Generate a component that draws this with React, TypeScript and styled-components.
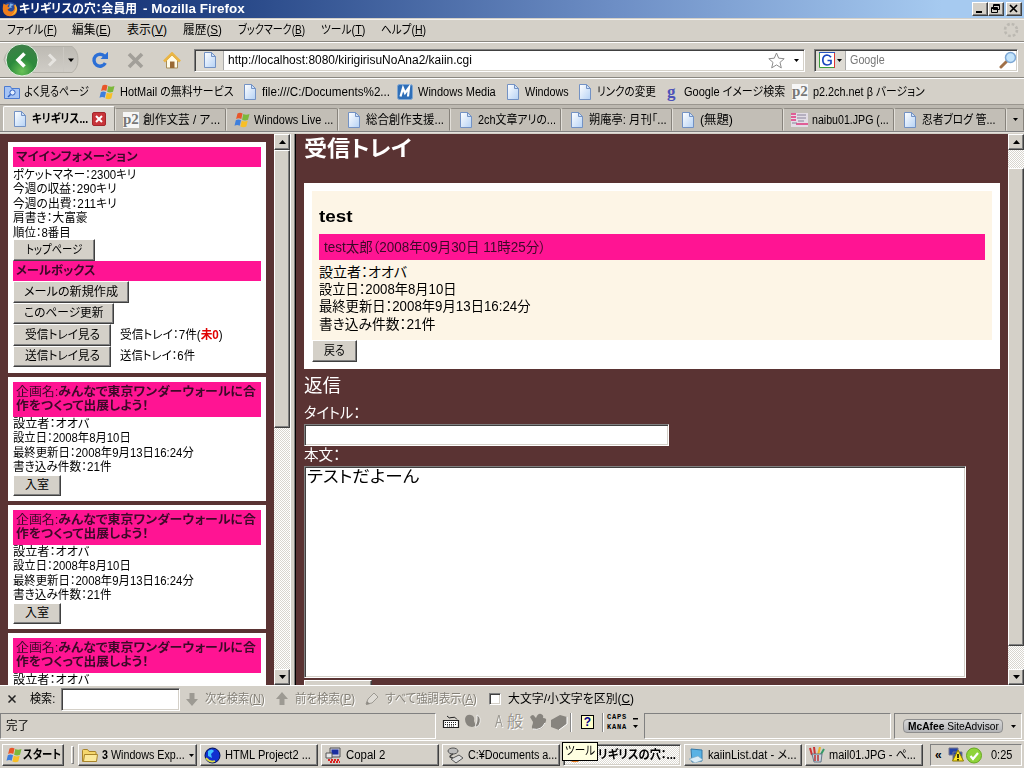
import React, { useLayoutEffect, useRef, useState } from 'react';
import styled, { createGlobalStyle, css } from 'styled-components';

const Global = createGlobalStyle`
  * { box-sizing: border-box; }
  html, body { margin: 0; padding: 0; overflow: hidden; }
  body {
    font-family: "Liberation Sans", "Noto Sans CJK JP", sans-serif;
    font-size: 12px;
    color: #000;
    background: #d4d0c8;
    font-feature-settings: "palt";
  }
`;

/* Text squeezed or stretched horizontally to a given width. */
const FitBox = styled.span<{ $w: number }>`
  display: inline-block;
  flex: none;
  width: ${(p) => p.$w}px;
  white-space: nowrap;
  overflow: visible;
`;
const FitInner = styled.span`
  display: inline-block;
  white-space: pre;
  transform-origin: 0 50%;
`;
function Fit({ w, children }: { w: number; children: React.ReactNode }) {
  const ref = useRef<HTMLSpanElement>(null);
  const [scale, setScale] = useState(1);
  useLayoutEffect(() => {
    if (ref.current) setScale(w / ref.current.offsetWidth);
  }, [w]);
  return (
    <FitBox $w={w}>
      <FitInner ref={ref} style={{ transform: `scaleX(${scale})` }}>{children}</FitInner>
    </FitBox>
  );
}

const raised = css`
  border: 1px solid;
  border-color: #fff #404040 #404040 #fff;
  box-shadow: inset -1px -1px 0 #808080;
`;
const sunken = css`
  border: 1px solid;
  border-color: #808080 #fff #fff #808080;
  box-shadow: inset 1px 1px 0 #404040, inset -1px -1px 0 #d4d0c8;
`;

const Screen = styled.div`
  width: 1024px;
  height: 768px;
  display: flex;
  flex-direction: column;
  overflow: hidden;
  background: #d4d0c8;
`;

/* ---- title bar ---- */
const TitleBar = styled.div`
  height: 18px;
  flex: none;
  display: flex;
  align-items: center;
  background: linear-gradient(90deg, #0c286e 0%, #264686 22%, #6d8ec5 60%, #a6caf0 92%);
  color: #fff;
  font-weight: bold;
  padding: 0 0 0 2px;
  line-height: 18px;
  gap: 1px;
`;
const Caption = styled.span`flex: 1; display: flex; gap: 6px;`;
const WinButton = styled.span<{ $gap?: number }>`
  width: 16px;
  height: 14px;
  background: #d4d0c8;
  display: flex;
  margin-left: ${(p) => p.$gap ?? 0}px;
  ${raised}
`;
const WinButtons = styled.div`display: flex; padding-right: 2px;`;

/* ---- menu bar ---- */
const MenuBar = styled.div`
  height: 23px;
  flex: none;
  display: flex;
  align-items: center;
  padding: 0 5px 2px 7px;
  margin-top: 1px;
  border-top: 1px solid #f4f2ee;
  border-bottom: 1px solid #8a8780;
  line-height: 18px;
`;
const MenuItem = styled.span<{ $gap: number }>`margin-right: ${(p) => p.$gap}px;`;
const Spacer = styled.span`flex: 1;`;

/* ---- navigation bar ---- */
const NavBar = styled.div`
  height: 36px;
  flex: none;
  display: flex;
  align-items: center;
  border-top: 1px solid #fff;
  border-bottom: 1px solid #8a8780;
  padding-left: 3px;
`;
const NavGap = styled.span<{ $w: number }>`width: ${(p) => p.$w}px; flex: none;`;
const Field = styled.div<{ $w: number; $h: number }>`
  width: ${(p) => p.$w}px;
  height: ${(p) => p.$h}px;
  background: #fff;
  display: flex;
  align-items: center;
  flex: none;
  ${sunken}
`;
const FieldCell = styled.span<{ $w: number }>`
  width: ${(p) => p.$w}px;
  height: 19px;
  margin-left: 1px;
  background: #dedbd4;
  border-right: 1px solid #aaa;
  margin-right: 4px;
  display: flex;
  align-items: center;
  justify-content: center;
  gap: 2px;
`;
const Hint = styled.span`color: #777; flex: 1;`;

/* ---- bookmarks ---- */
const Bookmarks = styled.div`
  height: 27px;
  flex: none;
  border-top: 1px solid #fff;
  border-bottom: 1px solid #9a968f;
  display: grid;
  align-items: center;
  padding-left: 4px;
  grid-template-columns: 95px 143px 155px 108px 72px 88px 127px 1fr;
`;
const Bookmark = styled.span<{ $gap?: number }>`
  display: flex;
  align-items: center;
  gap: ${(p) => p.$gap ?? 4}px;
  line-height: 18px;
`;

/* ---- tabs ---- */
const TabStrip = styled.div`
  height: 27px;
  flex: none;
  background: #bcb8b0;
  display: flex;
  align-items: flex-end;
  padding-left: 3px;
  border-bottom: 1px solid #808080;
`;
const Tab = styled.div<{ $w: number; $active?: boolean; $pad?: number }>`
  width: ${(p) => p.$w}px;
  height: ${(p) => (p.$active ? 25 : 23)}px;
  background: ${(p) => (p.$active ? '#d8d5ce' : '#c2beb6')};
  border: 1px solid;
  border-color: ${(p) => (p.$active ? '#fff #8a8780 #d8d5ce #fff' : '#908c85 #86827b #c2beb6 #e2dfd9')};
  border-radius: 2px 2px 0 0;
  font-weight: ${(p) => (p.$active ? 'bold' : 'normal')};
  display: flex;
  align-items: center;
  gap: 4px;
  padding-left: ${(p) => p.$pad ?? 7}px;
  line-height: 18px;
  flex: none;
`;
const TabEdge = styled.div`height: 2px; flex: none; background: #d4d0c8; border-top: 1px solid #e4e1dc;`;
const CloseBox = styled.span`
  width: 14px;
  height: 14px;
  background: #c8353a;
  border: 1px solid #a3262b;
  border-radius: 2px;
  display: flex;
`;
const P2Box = styled.span`
  width: 16px;
  height: 16px;
  background: #f6f6f6;
  color: #777;
  font: bold 15px/14px "Liberation Serif", serif;
`;

/* ---- content frames ---- */
const Frames = styled.div`
  height: 551px;
  flex: none;
  display: flex;
  overflow: hidden;
  background: #5a3333;
`;
const SideFrame = styled.div`
  width: 274px;
  padding: 8px 8px 0;
  display: flex;
  flex-direction: column;
  gap: 4px;
  flex: none;
`;
const Card = styled.div<{ $h: number }>`
  height: ${(p) => p.$h}px;
  flex: none;
  background: #fff;
  padding: 5px 5px 0;
  line-height: 14.4px;
`;
const PinkHead = styled.div<{ $two?: boolean; $gap?: number }>`
  height: ${(p) => (p.$two ? 35 : 20)}px;
  margin-top: ${(p) => p.$gap ?? 0}px;
  background: #ff1493;
  color: #3c0a28;
  padding: 3px 3px 0;
  line-height: 14px;
  font-weight: ${(p) => (p.$two ? 'normal' : 'bold')};
`;
const Line = styled.div`height: 14.4px; overflow: visible;`;
const InfoLines = styled.div`height: 72px; padding-top: 1px;`;
const Button = styled.span<{ $w: number; $h?: number }>`
  display: flex;
  align-items: center;
  justify-content: center;
  width: ${(p) => p.$w}px;
  height: ${(p) => p.$h ?? 21.5}px;
  background: #d4d0c8;
  line-height: 16px;
  flex: none;
  ${raised}
`;
const MailRow = styled.div`display: flex; align-items: center; gap: 9px; height: 21.5px;`;
const Unread = styled.b`color: #e00000;`;

const ScrollTrack = styled.div<{ $w: number }>`
  width: ${(p) => p.$w}px;
  height: 551px;
  flex: none;
  display: flex;
  flex-direction: column;
  background: repeating-conic-gradient(#fff 0 25%, #d8d5ce 0 50%) 0 0 / 2px 2px;
`;
const ScrollButton = styled.div`
  height: 16px;
  flex: none;
  background: #d4d0c8;
  display: flex;
  align-items: center;
  justify-content: center;
  ${raised}
`;
const Thumb = styled.div<{ $h: number; $top: number }>`
  height: ${(p) => p.$h}px;
  margin-top: ${(p) => p.$top}px;
  flex: none;
  background: #d4d0c8;
  ${raised}
`;
const Splitter = styled.div`
  width: 6px;
  flex: none;
  background: #d4d0c8;
  border-left: 1px solid #fff;
  border-right: 1px solid #000;
  box-shadow: inset -1px 0 0 #808080;
`;
const MainFrame = styled.div`
  flex: 1;
  padding: 0 8px;
  color: #fff;
  display: flex;
  flex-direction: column;
  align-items: flex-start;
`;
const Heading = styled.h1`
  margin: 0;
  height: 49px;
  flex: none;
  font-size: 22px;
  line-height: 30px;
`;
const Panel = styled.div`
  width: 696px;
  height: 186px;
  background: #fff;
  color: #000;
  padding: 8px;
  flex: none;
`;
const Message = styled.div`
  height: 149px;
  background: #fdf5e6;
  padding: 16px 7px 0;
  font-size: 14px;
  line-height: 17.2px;
`;
const Subject = styled.div`
  height: 27px;
  font-size: 16px;
  font-weight: bold;
  line-height: 20px;
`;
const Sender = styled.div`
  height: 26px;
  background: #ff1493;
  color: #3c0a28;
  padding-left: 5px;
  line-height: 26px;
  margin-bottom: 4px;
`;
const MessageLine = styled.div`height: 17.2px;`;
const Sub = styled.div`height: 35px; flex: none; font-size: 18px; line-height: 35px;`;
const Label = styled.div<{ $h: number }>`
  height: ${(p) => p.$h}px;
  flex: none;
  line-height: ${(p) => p.$h - 2}px;
  font-size: 15px;
`;
const TextInput = styled.div`width: 365px; height: 22px; background: #fff; flex: none; ${sunken}`;
const TextArea = styled.div`
  width: 662px;
  height: 212px;
  background: #fff;
  color: #000;
  font-size: 16px;
  line-height: 20px;
  padding-left: 2px;
  flex: none;
  margin-bottom: 2px;
  ${sunken}
`;

/* ---- find bar, status bar ---- */
const FindBar = styled.div`
  height: 27px;
  flex: none;
  display: flex;
  align-items: center;
  border-top: 1px solid #fff;
  padding-left: 8px;
  line-height: 18px;
`;
const Dim = styled.span`color: #858178; text-shadow: 1px 1px 0 #fff;`;
const CheckBox = styled.span`width: 12px; height: 12px; background: #fff; ${sunken}`;
const StatusBar = styled.div`
  height: 28px;
  flex: none;
  display: flex;
  line-height: 24px;
`;
const StatusPane = styled.div<{ $w: number }>`
  width: ${(p) => p.$w}px;
  height: 26px;
  margin-top: 1px;
  display: flex;
  align-items: center;
  border: 1px solid;
  border-color: #808080 #fff #fff #808080;
  padding-left: 5px;
`;
const ImeBar = styled.div`
  width: 208px;
  height: 28px;
  display: flex;
  align-items: center;
  padding: 0 0 8px 6px;
`;
const LockKeys = styled.span`
  font: bold 7px/10px "Liberation Mono", monospace;
  width: 26px;
  margin-left: 3px;
  letter-spacing: 0.8px;
`;
const Divider = styled.span`width: 2px; height: 19px; border-left: 1px solid #888; border-right: 1px solid #fff;`;
const Advisor = styled.span`
  width: 100px;
  height: 14px;
  border: 1px solid #8d8d8d;
  border-radius: 4px;
  background: linear-gradient(#d8d8d8, #b4b5b8);
  font-size: 11px;
  line-height: 12px;
  padding-left: 4px;
  margin: 0 8px 0 2px;
`;

/* ---- task bar ---- */
const TaskBar = styled.div`
  height: 28px;
  flex: none;
  display: flex;
  align-items: center;
  border-top: 1px solid #fff;
  padding: 2px 1px 1px 2px;
  line-height: 18px;
`;
const Task = styled.div<{ $w: number; $ml?: number; $down?: boolean; $gap?: number }>`
  width: ${(p) => p.$w}px;
  height: 22px;
  margin-left: ${(p) => p.$ml ?? 3}px;
  display: flex;
  align-items: center;
  gap: ${(p) => p.$gap ?? 4}px;
  padding-left: 3px;
  flex: none;
  position: relative;
  background: ${(p) => (p.$down ? 'repeating-conic-gradient(#fff 0 25%, #dedbd4 0 50%) 0 0 / 2px 2px' : '#d4d0c8')};
  ${(p) => (p.$down ? sunken : raised)}
`;
const Tip = styled.span`
  position: absolute;
  left: -2px;
  top: -3px;
  width: 36px;
  height: 19px;
  padding-left: 2px;
  line-height: 17px;
  background: #ffffe1;
  border: 1px solid #000;
  font-weight: normal;
`;
const Grip = styled.span`width: 3px; height: 18px; margin-left: 7px; border: 1px solid; border-color: #fff #808080 #808080 #fff;`;
const Tray = styled.div`
  width: 92px;
  height: 22px;
  margin-left: 7px;
  display: flex;
  align-items: center;
  padding-left: 4px;
  border: 1px solid;
  border-color: #808080 #fff #fff #808080;
`;

/* ---- drawings ---- */
const Page = () => (
  <svg width="16" height="16" viewBox="0 0 16 16">
    <defs>
      <linearGradient id="pg" x1="0" y1="0" x2="1" y2="1">
        <stop offset="0" stopColor="#fff" />
        <stop offset="1" stopColor="#b5d2f5" />
      </linearGradient>
    </defs>
    <path d="M2.5.5h7l4 4v11h-11z" fill="url(#pg)" stroke="#7392c4" />
    <path d="M9.500.5v4h4z" fill="#cfe2fa" stroke="#7392c4" />
  </svg>
);
const Flag = ({ s = 16 }: { s?: number }) => (
  <svg width={s} height={s} viewBox="0 0 16 16">
    <path d="M3.500 1.500q2.500-1.500 5 0L7.300 7q-2.500-1.500-5.200 0z" fill="#e8562a" />
    <path d="M9.300 2q2.700 1.500 6.200 0l-1.500 5.800q-3 1.500-5.900 0z" fill="#7cb83a" />
    <path d="M1.800 8.200q2.500-1.500 5.200 0L5.700 13.700q-2.500-1.500-5.200 0z" fill="#3f7fdc" />
    <path d="M7.800 8.800q2.700 1.500 5.900 0L12.300 14.500q-3 1.500-5.900 0z" fill="#f8bf26" />
  </svg>
);
const Fox = () => (
  <svg width="16" height="16" viewBox="0 0 16 16">
    <circle cx="8" cy="8" r="7" fill="#2a4d9c" />
    <path d="M8 2.500c2 0 3 .8 3.500 1.500L9 5l1 1.500L7 7z" fill="#7fb4ea" />
    <path d="M1.500 2.500L4 4q1-1 3-1L5.500 5.500 8 7 5.500 8.500q1 2.500 4 2 3-1 3-4l-1-3q4 2 3.700 5.500Q14.500 15 8 15.300 1 15 .7 8 .8 5 1.500 2.500z" fill="#ee7d1c" />
    <path d="M13 3q3 4 1 8-2 3-5 3.500 4-3 4.500-6z" fill="#fbc73c" />
  </svg>
);
const Arrow = ({ up }: { up?: boolean }) => (
  <svg width="7" height="4" viewBox="0 0 7 4"><path d={up ? 'M3.500 0L7 4H0z' : 'M0 0h7L3.500 4z'} /></svg>
);
const Drop = () => (
  <svg width="5" height="3" viewBox="0 0 5 3"><path d="M0 0h5L2.500 3z" /></svg>
);
const NavButtons = () => (
  <svg width="76" height="34" viewBox="0 0 76 34">
    <defs>
      <radialGradient id="gb" cx=".5" cy=".85" r=".8">
        <stop offset="0" stopColor="#69c257" />
        <stop offset=".5" stopColor="#2c8a3c" />
        <stop offset="1" stopColor="#3d8048" />
      </radialGradient>
      <linearGradient id="pill" x1="0" y1="0" x2="0" y2="1">
        <stop offset="0" stopColor="#bdbab3" />
        <stop offset="1" stopColor="#d0cdc7" />
      </linearGradient>
    </defs>
    <path d="M12 3.500h57q6 4 6 13t-6 13H12q-8-3-11-13 2-9 11-13z" fill="url(#pill)" stroke="#b4b1a9" />
    <path d="M60.500 4v25" stroke="#cbc8c2" />
    <circle cx="19" cy="17" r="16" fill="url(#gb)" stroke="#e8f2e6" strokeWidth="1" />
    <path d="M21.500 10.500L15 17l6.500 6.500" fill="none" stroke="#fff" strokeWidth="3.600" />
    <path d="M46 11.500l5.500 5.500-5.500 5.500" fill="none" stroke="#e6e4e0" strokeWidth="3" />
    <path d="M65 15.500h6l-3 3.500z" />
  </svg>
);
const Reload = () => (
  <svg width="18" height="18" viewBox="0 0 18 18">
    <path d="M13.500 5.200A6 6 0 1 0 14.300 12" fill="none" stroke="#2c6fd6" strokeWidth="3.400" />
    <path d="M9.500 8h7.500V.8z" fill="#2c6fd6" />
  </svg>
);
const Stop = () => (
  <svg width="17" height="17" viewBox="0 0 17 17"><path d="M2 2l13 13M15 2L2 15" stroke="#a29f99" strokeWidth="3.600" /></svg>
);
const Home = () => (
  <svg width="18" height="17" viewBox="0 0 18 17">
    <path d="M3.500 8v8h11V8L9 3z" fill="#fffbe8" stroke="#a88d56" />
    <path d="M1 9.500l8-8 8 8" fill="none" stroke="#eab544" strokeWidth="2.600" />
    <path d="M7 9.500h4.500V16H7z" fill="#9a6a34" />
  </svg>
);
const Star = () => (
  <svg width="17" height="17" viewBox="0 0 17 17">
    <path d="M8.500 1l2.200 5.200 5.500.5-4.200 3.700 1.300 5.500-4.800-3-4.800 3L5 10.400.8 6.700l5.500-.5z" fill="#fff" stroke="#8c8c8c" />
  </svg>
);
const Magnifier = () => (
  <svg width="18" height="18" viewBox="0 0 18 18">
    <path d="M7.500 10.500L2 16" stroke="#a07048" strokeWidth="3" strokeLinecap="round" />
    <circle cx="11.500" cy="6.500" r="5" fill="#c4e4fb" stroke="#7da7d4" strokeWidth="1.500" />
  </svg>
);
const GIcon = () => (
  <svg width="16" height="16" viewBox="0 0 16 16">
    <path d="M.500.500h15v15H.500z" fill="#fff" stroke="#3b9c3b" />
    <path d="M15.500 0v16" stroke="#d33" /><path d="M0 .5h16" stroke="#2a55c0" />
    <path d="M12 5.200Q10.500 3 8 3 3.800 3.400 3.800 8T8 13q2.500 0 4-1.500V8.500H8.500" fill="none" stroke="#1b46c0" strokeWidth="1.700" />
  </svg>
);
const SmartFolder = () => (
  <svg width="16" height="16" viewBox="0 0 16 16">
    <path d="M.500 2.500h6l1 2h8v10h-15z" fill="#a6c4f4" stroke="#4c7bd0" />
    <circle cx="8.500" cy="8.500" r="2.600" fill="#e4f0ff" stroke="#2f5fc0" /><path d="M6.500 10.500L4 13" stroke="#2f5fc0" strokeWidth="1.500" />
  </svg>
);
const MediaIcon = () => (
  <svg width="16" height="16" viewBox="0 0 16 16">
    <rect x=".5" y=".5" width="15" height="15" rx="2" fill="#2f6fb8" stroke="#7fa6d2" />
    <path d="M3.500 12.500L6 4l2 5 4-5.500-1 9" fill="none" stroke="#fff" strokeWidth="2.200" />
  </svg>
);
const SmallG = styled.span`font: bold 17px/14px "Liberation Serif", serif; color: #4c52b8; width: 12px; padding-left: 2px;`;
const Thumbnail = () => (
  <svg width="17" height="16" viewBox="0 0 17 16">
    <path d="M0 1h17v14H0z" fill="#e3dde6" />
    <path d="M0 2h5M0 5h5M0 8h5M5 12h12" stroke="#e0357c" strokeWidth="1.500" /><path d="M6 3h9M6 6h9M1 11h5M7 9h6" stroke="#88829a" />
  </svg>
);
const Throbber = () => (
  <svg width="16" height="16" viewBox="0 0 16 16">
    <circle cx="8" cy="8" r="6" fill="none" stroke="#bbb8b1" strokeWidth="2.600" strokeDasharray="2.700 2.010" />
  </svg>
);
const FindArrow = ({ up }: { up?: boolean }) => (
  <svg width="12" height="14" viewBox="0 0 12 14">
    <path d={up ? 'M6 0l6 7H8.500v6h-5V7H0z' : 'M6 14l6-7H8.500V1h-5v6H0z'} fill="#9d9a93" />
  </svg>
);
const Pen = () => (
  <svg width="14" height="14" viewBox="0 0 14 14"><path d="M1 12l2-5 6-6 4 4-6 6z" fill="#dedbd5" stroke="#9d9a93" /><path d="M1 13l1-4 3 3z" fill="#8d8a83" /></svg>
);
const Keyboard = () => (
  <svg width="18" height="16" viewBox="0 0 18 16">
    <path d="M1.500 6.500h15v7h-15z" fill="#fff" stroke="#222" strokeWidth="1.200" /><path d="M3 8.500h12M3 10.500h12M5 12h8" stroke="#222" strokeDasharray="1 1" />
    <path d="M5 2q2 3 5 1.500t5 2" fill="none" stroke="#222" />
  </svg>
);
const Blobs = () => (
  <svg width="18" height="18" viewBox="0 0 18 18">
    <path d="M1 6q1-5 6-4 4 1 3 6l2 5-4 1q-7-1-7-8z" fill="#87847e" /><path d="M13 2q4 2 3 7t-5 5q3-6 2-12z" fill="#87847e" stroke="#fff" strokeWidth=".7" />
  </svg>
);
const Cat = () => (
  <svg width="18" height="18" viewBox="0 0 18 18"><path d="M1 4q3-4 5 0l1 1q2-5 5-4t2 4q4 0 3 3-3 9-10 9-5-1-4-4 1-2 1-4z" fill="#87847e" /><path d="M4 16q8 2 12-6" fill="none" stroke="#fff" /></svg>
);
const Box = () => (
  <svg width="18" height="18" viewBox="0 0 18 18"><path d="M1 7l9-5 7 2v7l-8 6-8-3z" fill="#87847e" /><path d="M9 17l8-6V4" fill="none" stroke="#fff" /></svg>
);
const Outline = styled.span`color: #99968f; font-size: 16px; line-height: 18px; text-shadow: 1px 1px 0 #fff;`;
const HelpMark = styled.span`
  width: 13px; height: 14px; border: 1px solid #000; background: #ffffc8; color: #00008b;
  font-weight: bold; line-height: 13px; text-align: center; margin: 0 8px 0 9px;
`;
const FolderIcon = () => (
  <svg width="16" height="16" viewBox="0 0 16 16"><path d="M.500 3.500q0-1 1-1h4l1.500 2h6q1 0 1 1v9H.500z" fill="#f5d76c" stroke="#a98429" /><path d="M1.500 14.500l1-7h13l-1 7z" fill="#fbe99a" stroke="#a98429" /></svg>
);
const Globe = () => (
  <svg width="17" height="17" viewBox="0 0 17 17"><circle cx="8.500" cy="8.500" r="7.500" fill="#1030d0" stroke="#001050" /><path d="M4 4q4-3 6 0l-3 3 1 4-4-2z" fill="#3fc0ff" /><path d="M2 11q4 5 9 3" fill="none" stroke="#e0e040" strokeWidth="1.800" /></svg>
);
const CopalIcon = () => (
  <svg width="17" height="17" viewBox="0 0 17 17"><path d="M5 1h10v9H5z" fill="#ccd" stroke="#555" /><path d="M6.500 2.500h7v5h-7z" fill="#1a2ea0" /><path d="M1 6h6v5H1z" fill="#e8e8e8" stroke="#555" /><path d="M3 13h12M5 15h10" stroke="#d22" strokeWidth="2" strokeDasharray="2 1" /></svg>
);
const DriveIcon = () => (
  <svg width="18" height="17" viewBox="0 0 18 17"><ellipse cx="7" cy="4" rx="5" ry="3" fill="#bbb" stroke="#555" /><path d="M7 7q-6 3 0 4" fill="none" stroke="#444" strokeWidth="1.500" /><path d="M5 12l8-4 4 3-7 5z" fill="#ddd" stroke="#555" /></svg>
);
const NoteIcon = () => (
  <svg width="16" height="16" viewBox="0 0 16 16"><path d="M3 2l11 1v11l-10 1z" fill="#59b2e4" stroke="#3579a8" /><path d="M1 12l9-3 5 4-8 3z" fill="#d9ecf7" stroke="#7ba4bd" strokeWidth=".6" /></svg>
);
const PaintIcon = () => (
  <svg width="16" height="16" viewBox="0 0 16 16"><path d="M3 8L1 1M6 8L5 0" stroke="#c33" strokeWidth="2" /><path d="M9 8l2-8" stroke="#e8b12a" strokeWidth="2" /><path d="M11 9l4-7" stroke="#396" strokeWidth="2" /><path d="M3 7h10l-1 8H5z" fill="#c7d6df" stroke="#678" /><path d="M6 8v6M9 8v6" stroke="#b33" strokeWidth="1.500" /></svg>
);
const TrayIcons = () => (
  <svg width="36" height="17" viewBox="0 0 36 17">
    <path d="M2 1h9v7H2zM6 5h9v8H6z" fill="#2442a8" stroke="#778" /><path d="M11 3l5.500 11h-11z" fill="#ffe52a" stroke="#8a7a00" /><path d="M11 7v4M11 12v1.500" stroke="#000" strokeWidth="1.500" />
    <circle cx="27" cy="8.500" r="7.500" fill="#8fd43a" stroke="#68a822" /><path d="M23.500 9l2.500 3 5-6" fill="none" stroke="#fff" strokeWidth="2.200" />
  </svg>
);
const Small = styled.svg`display: block;`;

/* The last project reaches the lower edge of the frame, so only its first line fits. */
const PROJECTS = [
  { height: 124, full: true },
  { height: 124, full: true },
  { height: 52, full: false },
];

function ProjectCard({ height, full }: { height: number; full: boolean }) {
  return (
    <Card $h={height}>
      <PinkHead $two>
        <Line><Fit w={240}>企画名:<b>みんなで東京ワンダーウォールに合</b></Fit></Line>
        <Line><Fit w={133}><b>作をつくって出展しよう！</b></Fit></Line>
      </PinkHead>
      <Line><Fit w={76}>設立者：オオバ</Fit></Line>
      {full && (
        <>
          <Line><Fit w={118}>設立日：2008年8月10日</Fit></Line>
          <Line><Fit w={181}>最終更新日：2008年9月13日16:24分</Fit></Line>
          <Line><Fit w={99}>書き込み件数：21件</Fit></Line>
          <Button $w={48}><Fit w={24}>入室</Fit></Button>
        </>
      )}
    </Card>
  );
}

const menu: [React.ReactNode, number, number][] = [
  [<>ファイル(<u>F</u>)</>, 50, 15],
  [<>編集(<u>E</u>)</>, 39, 16],
  [<>表示(<u>V</u>)</>, 40, 16],
  [<>履歴(<u>S</u>)</>, 39, 16],
  [<>ブックマーク(<u>B</u>)</>, 67, 16],
  [<>ツール(<u>T</u>)</>, 44, 16],
  [<>ヘルプ(<u>H</u>)</>, 45, 0],
];

export default function App() {
  return (
    <>
      <Global />
      <Screen>
        <TitleBar>
          <Fox />
          <Caption><Fit w={118}>キリギリスの穴：会員用</Fit><Fit w={102}>- Mozilla Firefox</Fit></Caption>
          <WinButtons>
            <WinButton><Small width="13" height="12"><path d="M3 8h6v2H3z" /></Small></WinButton>
            <WinButton><Small width="13" height="12"><path d="M4.500 1.500h6v5h-6zM4 2.500h7M2.500 4.500h6v5h-6zM2 5.500h7" fill="#d4d0c8" stroke="#000" /></Small></WinButton>
            <WinButton $gap={2}><Small width="13" height="12"><path d="M3 2l7 7M10 2L3 9" stroke="#000" strokeWidth="1.700" /></Small></WinButton>
          </WinButtons>
        </TitleBar>
        <MenuBar>
          {menu.map(([label, w, gap], i) => (
            <MenuItem key={i} $gap={gap}><Fit w={w}>{label}</Fit></MenuItem>
          ))}
          <Spacer />
          <Throbber />
        </MenuBar>
        <NavBar>
          <NavButtons />
          <NavGap $w={12} /><Reload />
          <NavGap $w={18} /><Stop />
          <NavGap $w={19} /><Home />
          <NavGap $w={13} />
          <Field $w={611} $h={23}>
            <FieldCell $w={28}><Page /></FieldCell>
            <Fit w={244}>http://localhost:8080/kirigirisuNoAna2/kaiin.cgi</Fit>
            <Spacer /><Star /><NavGap $w={9} /><Drop /><NavGap $w={5} />
          </Field>
          <NavGap $w={9} />
          <Field $w={204} $h={23}>
            <FieldCell $w={30}><GIcon /><Drop /></FieldCell>
            <Hint><Fit w={35}>Google</Fit></Hint>
            <Magnifier />
          </Field>
        </NavBar>
        <Bookmarks>
          <Bookmark><SmartFolder /><Fit w={65}>よく見るページ</Fit></Bookmark>
          <Bookmark $gap={5}><Flag /><Fit w={114}>HotMail の無料サービス</Fit></Bookmark>
          <Bookmark><Page /><Fit w={128}>file:///C:/Documents%2...</Fit></Bookmark>
          <Bookmark $gap={5}><MediaIcon /><Fit w={78}>Windows Media</Fit></Bookmark>
          <Bookmark><Page /><Fit w={44}>Windows</Fit></Bookmark>
          <Bookmark><Page /><Fit w={59}>リンクの変更</Fit></Bookmark>
          <Bookmark $gap={7}><SmallG>g</SmallG><Fit w={101}>Google イメージ検索</Fit></Bookmark>
          <Bookmark $gap={5}><P2Box>p2</P2Box><Fit w={112}>p2.2ch.net β バージョン</Fit></Bookmark>
        </Bookmarks>
        <TabStrip>
          <Tab $w={112} $active $pad={8}><Page /><Fit w={56}>キリギリス...</Fit><CloseBox><Small width="12" height="12"><path d="M3 3l6 6M9 3L3 9" stroke="#fff" strokeWidth="2" /></Small></CloseBox></Tab>
          <Tab $w={111}><P2Box>p2</P2Box><Fit w={77}>創作文芸 / ア...</Fit></Tab>
          <Tab $w={112}><Flag /><Fit w={79}>Windows Live ...</Fit></Tab>
          <Tab $w={112}><Page /><Fit w={78}>総合創作支援...</Fit></Tab>
          <Tab $w={111}><Page /><Fit w={78}>2ch文章アリの...</Fit></Tab>
          <Tab $w={111}><Page /><Fit w={78}>朔庵亭: 月刊「...</Fit></Tab>
          <Tab $w={111}><Page /><Fit w={33}>(無題)</Fit></Tab>
          <Tab $w={111}><Thumbnail /><Fit w={77}>naibu01.JPG (...</Fit></Tab>
          <Tab $w={112}><Page /><Fit w={73}>忍者ブログ 管...</Fit></Tab>
          <Tab $w={18} $pad={6}><Drop /></Tab>
        </TabStrip>
        <TabEdge />

        <Frames>
          <SideFrame>
            <Card $h={231}>
              <PinkHead><Fit w={122}>マイインフォメーション</Fit></PinkHead>
              <InfoLines>
                <Line><Fit w={123}>ポケットマネー：2300キリ</Fit></Line>
                <Line><Fit w={104}>今週の収益：290キリ</Fit></Line>
                <Line><Fit w={104}>今週の出費：211キリ</Fit></Line>
                <Line><Fit w={75}>肩書き：大富豪</Fit></Line>
                <Line><Fit w={58}>順位：8番目</Fit></Line>
              </InfoLines>
              <Button $w={82}><Fit w={56}>トップページ</Fit></Button>
              <PinkHead $gap={0.5}><Fit w={80}>メールボックス</Fit></PinkHead>
              <Button $w={116}><Fit w={94}>メールの新規作成</Fit></Button>
              <Button $w={101}><Fit w={79}>このページ更新</Fit></Button>
              <MailRow><Button $w={98}><Fit w={75}>受信トレイ見る</Fit></Button><Fit w={103}>受信トレイ：7件(<Unread>未0</Unread>)</Fit></MailRow>
              <MailRow><Button $w={98}><Fit w={75}>送信トレイ見る</Fit></Button><Fit w={75}>送信トレイ：6件</Fit></MailRow>
            </Card>
            {PROJECTS.map((p, i) => <ProjectCard key={i} {...p} />)}
          </SideFrame>
          <ScrollTrack $w={16}>
            <ScrollButton><Arrow up /></ScrollButton>
            <Thumb $h={278} $top={0} />
            <Spacer />
            <ScrollButton><Arrow /></ScrollButton>
          </ScrollTrack>
          <Splitter />
          <MainFrame>
            <Heading><Fit w={108}>受信トレイ</Fit></Heading>
            <Panel>
              <Message>
                <Subject><Fit w={33}>test</Fit></Subject>
                <Sender><Fit w={222}>test太郎（2008年09月30日 11時25分）</Fit></Sender>
                <MessageLine><Fit w={88}>設立者：オオバ</Fit></MessageLine>
                <MessageLine><Fit w={138}>設立日：2008年8月10日</Fit></MessageLine>
                <MessageLine><Fit w={212}>最終更新日：2008年9月13日16:24分</Fit></MessageLine>
                <MessageLine><Fit w={117}>書き込み件数：21件</Fit></MessageLine>
              </Message>
              <Button $w={45}><Fit w={21}>戻る</Fit></Button>
            </Panel>
            <Sub><Fit w={37}>返信</Fit></Sub>
            <Label $h={20}><Fit w={56}>タイトル：</Fit></Label>
            <TextInput />
            <Label $h={20}><Fit w={37}>本文：</Fit></Label>
            <TextArea><Fit w={112}>テストだよーん</Fit></TextArea>
            <Button $w={68} $h={22} />
          </MainFrame>
          <ScrollTrack $w={16}>
            <ScrollButton><Arrow up /></ScrollButton>
            <Thumb $h={478} $top={18} />
            <Spacer />
            <ScrollButton><Arrow /></ScrollButton>
          </ScrollTrack>
        </Frames>

        <FindBar>
          <Small width="8" height="8"><path d="M.500.500l7 7M7.500.500l-7 7" stroke="#222" strokeWidth="1.500" /></Small>
          <NavGap $w={14} /><Fit w={25}>検索:</Fit><NavGap $w={6} />
          <Field $w={119} $h={23} />
          <NavGap $w={6} /><FindArrow /><NavGap $w={7} /><Dim><Fit w={60}>次を検索(<u>N</u>)</Fit></Dim>
          <NavGap $w={11} /><FindArrow up /><NavGap $w={7} /><Dim><Fit w={60}>前を検索(<u>P</u>)</Fit></Dim>
          <NavGap $w={10} /><Pen /><NavGap $w={6} /><Dim><Fit w={92}>すべて強調表示(<u>A</u>)</Fit></Dim>
          <NavGap $w={12} /><CheckBox /><NavGap $w={7} /><Fit w={126}>大文字/小文字を区別(<u>C</u>)</Fit>
        </FindBar>
        <StatusBar>
          <StatusPane $w={436}><Fit w={23}>完了</Fit></StatusPane>
          <ImeBar>
            <Keyboard /><NavGap $w={4} /><Blobs />
            <NavGap $w={13} /><Outline><Fit w={8}>A</Fit></Outline><NavGap $w={4} /><Outline><Fit w={16}>般</Fit></Outline>
            <NavGap $w={6} /><Cat /><NavGap $w={3} /><Box /><NavGap $w={2} /><Divider />
            <HelpMark>?</HelpMark><Divider />
            <LockKeys>CAPS KANA</LockKeys>
            <Small width="6" height="14"><path d="M0 3h5v1.500H0zM0 10h5l-2.500 3z" /></Small>
          </ImeBar>
          <StatusPane $w={247} />
          <NavGap $w={3} />
          <StatusPane $w={128}>
            <NavGap $w={1} />
            <Advisor><Fit w={91}><b>McAfee</b> SiteAdvisor</Fit></Advisor>
            <Drop />
          </StatusPane>
        </StatusBar>
        <TaskBar>
          <Task $w={62} $ml={0} $gap={1}><Flag /><Fit w={38}><b>スタート</b></Fit></Task>
          <Grip />
          <Task $w={119} $ml={4}><FolderIcon /><Fit w={83}><b>3</b> Windows Exp...</Fit><Drop /></Task>
          <Task $w={118}><Globe /><Fit w={86}>HTML Project2 ...</Fit></Task>
          <Task $w={118}><CopalIcon /><Fit w={39}>Copal 2</Fit></Task>
          <Task $w={118}><DriveIcon /><Fit w={89}>C:¥Documents a...</Fit></Task>
          <Task $w={118} $down>
            <Fox /><NavGap $w={7} /><b><Fit w={78}>リギリスの穴：...</Fit></b>
            <Tip><Fit w={30}>ツール</Fit></Tip>
          </Task>
          <Task $w={118}><NoteIcon /><Fit w={89}>kaiinList.dat - メ...</Fit></Task>
          <Task $w={118}><PaintIcon /><Fit w={87}>mail01.JPG - ペ...</Fit></Task>
          <Tray><b>«</b><NavGap $w={5} /><TrayIcons /><NavGap $w={8} /><Fit w={21}>0:25</Fit></Tray>
        </TaskBar>
      </Screen>
    </>
  );
}
